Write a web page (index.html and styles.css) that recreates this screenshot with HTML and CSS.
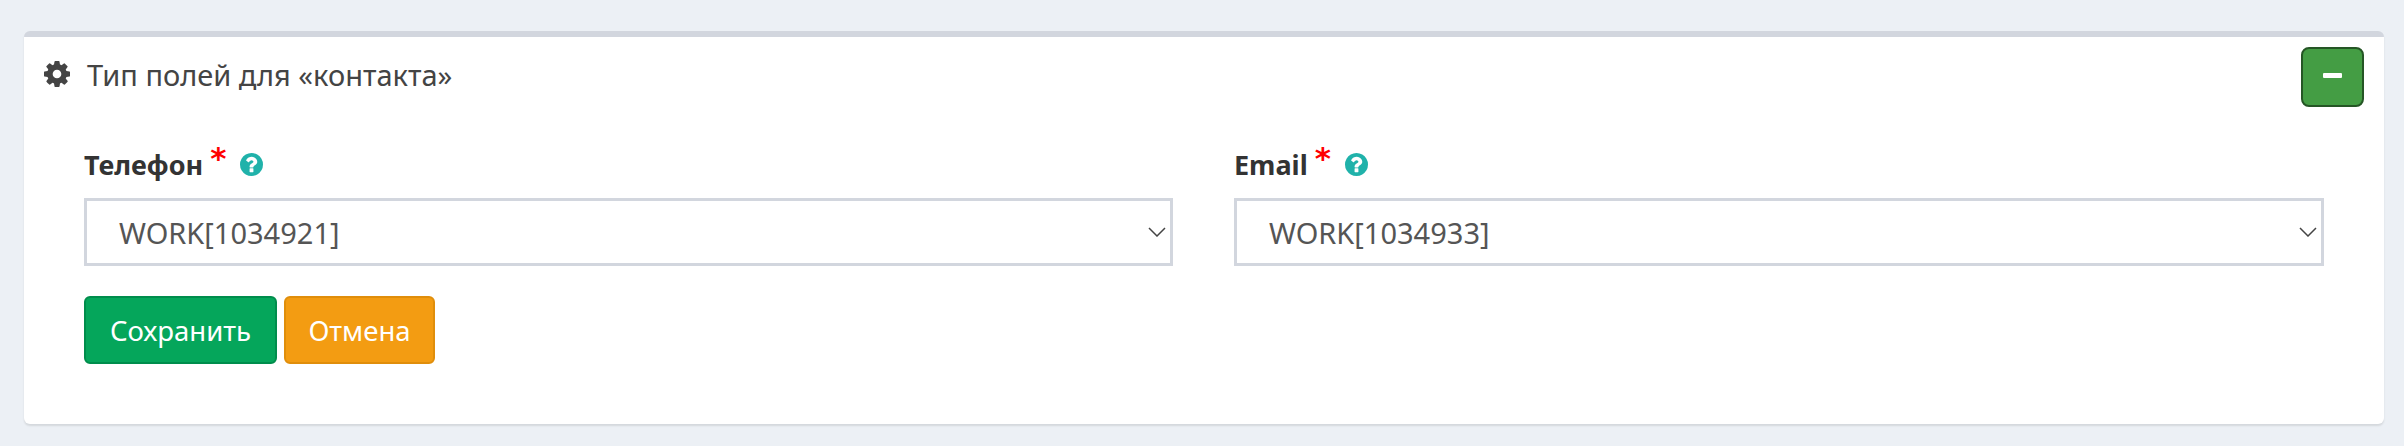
FILE: index.html
```html
<!DOCTYPE html>
<html>
<head>
    <title>Тип полей для контакта</title>
    <link rel="stylesheet" href="styles.css">
</head>
<body>

    <div class="box">
        <div class="box-header">
            <div class="box-title">
                <svg class="icon-gear" viewBox="128 128 1536 1536"><path d="M1152 896q0-106-75-181t-181-75-181 75-75 181 75 181 181 75 181-75 75-181zm512-109v222q0 12-8 23t-20 13l-185 28q-19 54-39 91 35 50 107 138 10 12 10 25t-9 23q-27 37-99 108t-94 71q-12 0-26-9l-138-108q-44 23-91 38-16 136-29 186-7 28-36 28h-222q-14 0-24.5-8.5t-11.5-21.5l-28-184q-49-16-90-37l-141 107q-10 9-25 9-14 0-25-11-126-114-165-168-7-10-7-23 0-12 8-23 15-21 51-66.5t54-70.5q-27-50-41-99l-183-27q-13-2-21-12.5t-8-23.5v-222q0-12 8-23t19-13l186-28q14-46 39-92-40-57-107-138-10-12-10-24 0-10 9-23 26-36 98.5-107.5t94.5-71.5q13 0 26 10l138 107q44-23 91-38 16-136 29-186 7-28 36-28h222q14 0 24.5 8.5t11.5 21.5l28 184q49 16 90 37l142-107q9-9 24-9 13 0 25 10 129 119 165 170 7 8 7 22 0 12-8 23-15 21-51 66.5t-54 70.5q26 50 41 98l183 28q13 2 21 12.5t8 23.5z"/></svg>
                <h3>Тип полей для «контакта»</h3>
            </div>
            <button class="btn-collapse" type="button"><span class="minus"></span></button>
        </div>

        <form class="box-body">
            <div class="form-row">
                <div class="form-group">
                    <label class="form-label">
                        <b>Телефон</b>
                        <span class="required">*</span>
                        <svg class="icon-help" viewBox="128 128 1536 1536"><path d="M1024 1376v-192q0-14-9-23t-23-9h-192q-14 0-23 9t-9 23v192q0 14 9 23t23 9h192q14 0 23-9t9-23zm256-672q0-88-55.5-163t-138.5-116-170-41q-243 0-371 213-15 24 8 42l132 100q7 6 19 6 16 0 25-12 53-68 86-92 34-24 86-24 48 0 85.5 26t37.5 59q0 38-20 61t-68 45q-63 28-115.5 86.5t-52.5 125.5v36q0 14 9 23t23 9h192q14 0 23-9t9-23q0-19 21.5-49.5t54.5-49.5q32-18 49-28.5t46-35 44.5-48 28-60.5 12.5-81zm384 192q0 209-103 385.5t-279.5 279.5-385.5 103-385.5-103-279.5-279.5-103-385.5 103-385.5 279.5-279.5 385.5-103 385.5 103 279.5 279.5 103 385.5z"/></svg>
                    </label>
                    <div class="select-box">
                        <span>WORK[1034921]</span>
                        <svg class="icon-chevron" viewBox="0 0 18 10"><path d="M1 1l8 8 8-8"/></svg>
                    </div>
                </div>
                <div class="form-group">
                    <label class="form-label">
                        <b>Email</b>
                        <span class="required">*</span>
                        <svg class="icon-help" viewBox="128 128 1536 1536"><path d="M1024 1376v-192q0-14-9-23t-23-9h-192q-14 0-23 9t-9 23v192q0 14 9 23t23 9h192q14 0 23-9t9-23zm256-672q0-88-55.5-163t-138.5-116-170-41q-243 0-371 213-15 24 8 42l132 100q7 6 19 6 16 0 25-12 53-68 86-92 34-24 86-24 48 0 85.5 26t37.5 59q0 38-20 61t-68 45q-63 28-115.5 86.5t-52.5 125.5v36q0 14 9 23t23 9h192q14 0 23-9t9-23q0-19 21.5-49.5t54.5-49.5q32-18 49-28.5t46-35 44.5-48 28-60.5 12.5-81zm384 192q0 209-103 385.5t-279.5 279.5-385.5 103-385.5-103-279.5-279.5-103-385.5 103-385.5 279.5-279.5 385.5-103 385.5 103 279.5 279.5 103 385.5z"/></svg>
                    </label>
                    <div class="select-box">
                        <span>WORK[1034933]</span>
                        <svg class="icon-chevron" viewBox="0 0 18 10"><path d="M1 1l8 8 8-8"/></svg>
                    </div>
                </div>
            </div>
            <div class="form-actions">
                <button class="btn btn-save" type="button">Сохранить</button>
                <button class="btn btn-cancel" type="button">Отмена</button>
            </div>
        </form>
    </div>

</body>
</html>
```

FILE: styles.css
```css
html, body {
    margin: 0;
    height: 100%;
}

body {
    box-sizing: border-box;
    padding: 31px 20px 0 24px;
    background-color: #ecf0f5;
    font-family: "Noto Sans", "Open Sans", sans-serif;
    color: #333;
    overflow: hidden;
}

.box {
    box-sizing: border-box;
    height: 393px;
    background-color: #fff;
    border-top: 6px solid #d2d6de;
    border-radius: 6px;
    box-shadow: 0 2px 2px rgba(0, 0, 0, 0.1);
}

.box-header {
    display: flex;
    justify-content: space-between;
    padding: 10px 20px 0 20px;
}

.box-title {
    display: flex;
    align-items: center;
    height: 44px;
    margin-top: 5px;
}

.box-title h3 {
    margin: 0 0 0 17px;
    font-size: 29px;
    font-weight: 400;
    color: #444;
}

.icon-gear {
    width: 26px;
    height: 26px;
    fill: #444;
}

.btn-collapse {
    display: flex;
    align-items: center;
    justify-content: center;
    width: 63px;
    height: 60px;
    padding: 0 0 3px 0;
    background-color: #449d44;
    border: 2px solid #255625;
    border-radius: 8px;
}

.minus {
    width: 19px;
    height: 5px;
    background-color: #fff;
    border-radius: 1px;
}

.box-body {
    padding: 35px 60px 0 60px;
}

.form-row {
    display: grid;
    grid-template-columns: 1089px 1090px;
    gap: 61px;
}

.form-label {
    display: flex;
    align-items: center;
    height: 44px;
    margin-bottom: 12px;
    font-size: 27px;
}

.form-label b {
    font-weight: 700;
}

.required {
    margin: -12px 0 0 7px;
    font-family: "DejaVu Sans", sans-serif;
    font-size: 31px;
    font-weight: 700;
    line-height: 1;
    color: #f00;
}

.icon-help {
    width: 23px;
    height: 23px;
    margin: 0 0 0 14px;
    fill: #20b2aa;
}

.select-box {
    box-sizing: border-box;
    display: flex;
    align-items: center;
    justify-content: space-between;
    height: 68px;
    padding: 0 4px 0 32px;
    border: 3px solid #d2d6de;
    font-size: 29px;
    color: #555;
}

.icon-chevron {
    width: 18px;
    height: 10px;
    fill: none;
    stroke: #444;
    stroke-width: 1.5;
}

.form-actions {
    display: flex;
    gap: 7px;
    margin-top: 30px;
}

.btn {
    height: 68px;
    padding: 0;
    border-radius: 6px;
    font-family: inherit;
    font-size: 27.5px;
    color: #fff;
}

.btn-save {
    width: 193px;
    background-color: #05a65b;
    border: 2px solid #008d4c;
}

.btn-cancel {
    width: 151px;
    background-color: #f39c12;
    border: 2px solid #e08e0b;
}
```
